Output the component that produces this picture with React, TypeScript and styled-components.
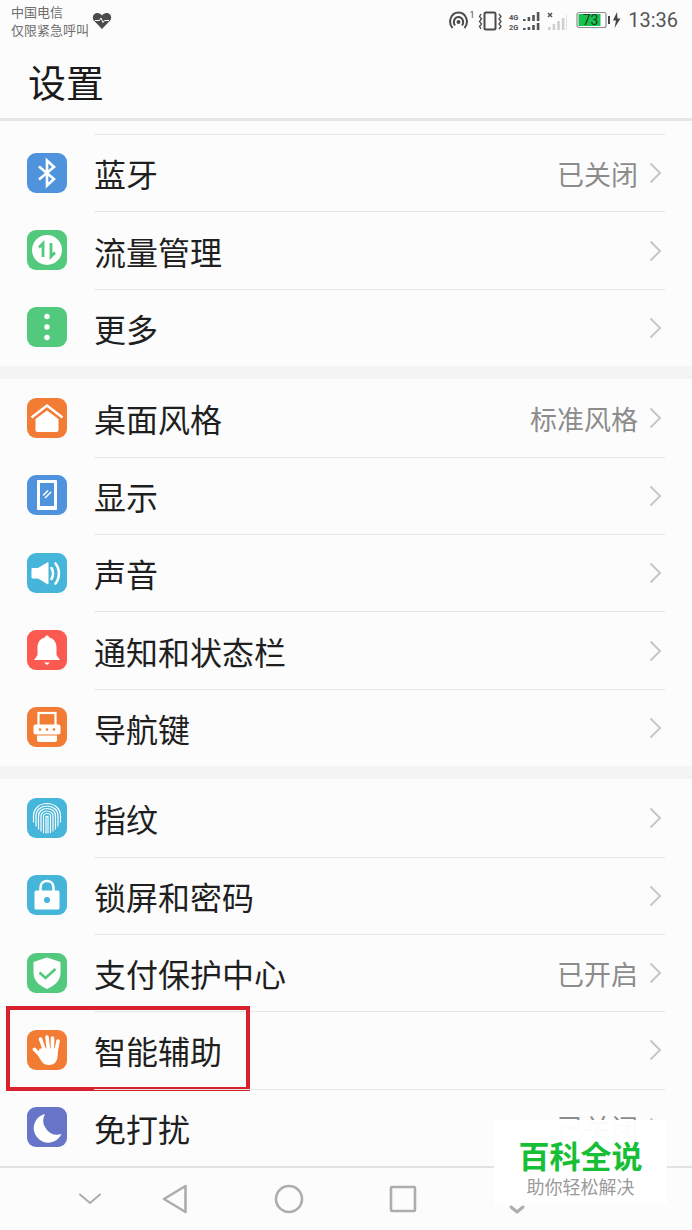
import React from 'react';
import styled, { createGlobalStyle } from 'styled-components';

const GlobalStyle = createGlobalStyle`
    html, body {
        margin: 0;
        padding: 0;
        background: #fcfcfc;
    }
    * {
        box-sizing: border-box;
    }
`;

const CJK = `'Noto Sans CJK SC', 'Noto Sans', sans-serif`;

const Page = styled.div`
    position: relative;
    width: 692px;
    height: 1230px;
    overflow: hidden;
    background: #fcfcfc;
    font-family: ${CJK};
    display: flex;
    flex-direction: column;
`;

const StatusBar = styled.div`
    height: 48px;
    flex: none;
    display: flex;
    align-items: flex-start;
    padding: 3px 14px 0 11px;
`;

const Carrier = styled.div`
    font-size: 13px;
    line-height: 18px;
    color: #6e6e6e;
    white-space: nowrap;
`;

const Heart = styled.svg`
    width: 20px;
    height: 18px;
    margin: 9px 0 0 3px;
`;

const StatusRight = styled.div`
    margin-left: auto;
    display: flex;
    align-items: center;
    height: 34px;
`;

const Network = styled.svg`
    width: 119px;
    height: 24px;
`;

const Battery = styled.svg`
    width: 47px;
    height: 24px;
    margin-left: 9px;
`;

const Clock = styled.span`
    font-family: Roboto, sans-serif;
    font-size: 20px;
    color: #555;
    margin-left: 5px;
`;

const TitleBar = styled.div`
    height: 73px;
    flex: none;
    border-bottom: 3px solid #e6e6e6;
    padding: 7px 0 0 28px;
`;

const Title = styled.h1`
    margin: 0;
    font-size: 38px;
    line-height: 52px;
    font-weight: 400;
    color: #1a1a1a;
`;

const List = styled.div`
    flex: 1;
    min-height: 0;
    padding-top: 13px;
    display: flex;
    flex-direction: column;
    gap: 13px;
    background: #f4f4f4;
    overflow: hidden;
`;

const ListTop = styled.div`
    height: 13px;
    margin: -13px 0 -13px;
    background: #fcfcfc;
    flex: none;
`;

const Group = styled.section`
    background: #fcfcfc;
    flex: none;
`;

const Row = styled.div`
    position: relative;
    height: 77.4px;
    display: flex;
    align-items: center;
    padding-left: 27px;
`;

const Tile = styled.svg<{ $bg: string }>`
    width: 40px;
    height: 40px;
    flex: none;
    border-radius: 9px;
    background: ${p => p.$bg};
`;

const RowBody = styled.div<{ $line: boolean }>`
    flex: 1;
    height: 100%;
    margin: 0 27px;
    display: flex;
    align-items: center;
    border-top: 1px solid ${p => (p.$line ? '#e6e6e6' : 'transparent')};
`;

const Label = styled.span`
    font-size: 32px;
    color: #1f1f1f;
    white-space: nowrap;
`;

const Value = styled.span`
    margin-left: auto;
    font-size: 27px;
    color: #8c8c8c;
    white-space: nowrap;
`;

const Chevron = styled.svg<{ $pushed: boolean }>`
    width: 13px;
    height: 22px;
    flex: none;
    margin: 0 3px 0 ${p => (p.$pushed ? '11px' : 'auto')};
`;

const Callout = styled.div`
    position: absolute;
    left: 6px;
    right: 442px;
    top: -5px;
    height: 85px;
    border: 4px solid #d8202f;
    pointer-events: none;
`;

const NavBar = styled.nav`
    height: 64px;
    flex: none;
    background: #fcfcfc;
    border-top: 2px solid #e2e2e2;
    display: flex;
    align-items: center;
    padding-left: 62px;
`;

const NavSlot = styled.div<{ $narrow?: boolean }>`
    width: ${p => (p.$narrow ? 56 : 114)}px;
    display: flex;
    justify-content: center;
`;

const NavIcon = styled.svg`
    width: 32px;
    height: 32px;
    fill: none;
    stroke: #adadad;
    stroke-width: 2.6;
    stroke-linejoin: round;
    stroke-linecap: round;
`;

const Badge = styled.div`
    position: absolute;
    left: 494px;
    top: 1120px;
    width: 173px;
    height: 85px;
    background: rgba(255, 255, 255, 0.97);
    display: flex;
    flex-direction: column;
    align-items: center;
    padding-top: 16px;
`;

const BadgeName = styled.div`
    font-size: 31px;
    line-height: 38px;
    font-weight: 700;
    color: #17bf37;
    white-space: nowrap;
`;

const BadgeSlogan = styled.div`
    font-size: 18px;
    line-height: 24px;
    color: #9b9b9b;
    white-space: nowrap;
`;

const BLUE = '#4f93dc';
const GREEN = '#52c97c';
const ORANGE = '#f37c35';
const TEAL = '#45b5d9';
const RED = '#fb5a50';
const PURPLE = '#6675c8';
const W = '#fff';

const icons: Record<string, { bg: string; art: React.ReactNode }> = {
    bluetooth: {
        bg: BLUE,
        art: <path d="M12 13.5 27 26 20 32.5V7.5L27 14 12 26.5" fill="none" stroke={W} strokeWidth="2.6" />
    },
    data: {
        bg: GREEN,
        art: (
            <>
                <circle cx="20" cy="20" r="15" fill={W} />
                <path d="M16 27V13.5L12 17.5" fill="none" stroke={GREEN} strokeWidth="2.8" />
                <path d="M24 13V26.5L28 22.5" fill="none" stroke={GREEN} strokeWidth="2.8" />
            </>
        )
    },
    more: {
        bg: GREEN,
        art: (
            <>
                <circle cx="20" cy="9.5" r="2.7" fill={W} />
                <circle cx="20" cy="20" r="2.7" fill={W} />
                <circle cx="20" cy="30.5" r="2.7" fill={W} />
            </>
        )
    },
    home: {
        bg: ORANGE,
        art: (
            <>
                <path d="M4.5 19.5 20 7.5 35.5 19.5" fill="none" stroke={W} strokeWidth="2.4" />
                <path d="M20 12.5 31.5 21V32a2 2 0 0 1-2 2H10.500a2 2 0 0 1-2-2V21Z" fill={W} />
            </>
        )
    },
    display: {
        bg: BLUE,
        art: (
            <>
                <rect x="10" y="5" width="20" height="30" rx="1" fill={W} />
                <rect x="13" y="8" width="14" height="23" fill={BLUE} />
                <path d="M16 20.500 21 15.500M18 23 24 17" stroke={W} strokeWidth="1.5" />
            </>
        )
    },
    sound: {
        bg: TEAL,
        art: (
            <>
                <path d="M5 15.500H11L21 9.500V31L11 25H5Z" fill={W} strokeLinejoin="round" stroke={W} />
                <path d="M24.500 15C26.500 18 26.500 23 24.500 26M28.500 10.500C33 16 33 25 28.500 30.500" fill="none" stroke={W} strokeWidth="2.6" strokeLinecap="round" />
            </>
        )
    },
    bell: {
        bg: RED,
        art: (
            <>
                <path d="M20 5.500c1.300 0 2 .9 2 1.900 5 1 7.500 5 7.500 10V25l3.500 5H7l3.500-5v-7.600c0-5 2.500-9 7.500-10 0-1 .7-1.900 2-1.900Z" fill={W} />
                <path d="M17 32.500h6l-3 2.500Z" fill={W} />
            </>
        )
    },
    navkeys: {
        bg: ORANGE,
        art: (
            <>
                <rect x="11.500" y="6" width="17" height="14" fill="none" stroke={W} strokeWidth="2.200" />
                <rect x="6.500" y="17.500" width="27" height="10" rx="2" fill={W} />
                <rect x="10" y="26" width="20" height="9" rx="2" fill={W} />
                <circle cx="13" cy="22.500" r="1.300" fill={ORANGE} />
                <circle cx="20" cy="22.500" r="1.300" fill={ORANGE} />
                <circle cx="27" cy="22.500" r="1.300" fill={ORANGE} />
                <path d="M9 28h22" stroke={ORANGE} strokeWidth="1.200" />
            </>
        )
    },
    fingerprint: {
        bg: TEAL,
        art: (
            <g fill="none" stroke={W} strokeWidth="1.200" strokeLinecap="round">
                <path d="M6.500 24V18C6.500 10.500 12.500 5.500 20 5.500S33.500 10.500 33.500 18V24" />
                <path d="M9 28V18C9 12 14 8 20 8S31 12 31 18V28" />
                <path d="M11.500 31V18C11.500 13.500 15.500 10.500 20 10.500S28.500 13.500 28.500 18V31" />
                <path d="M14 33V18C14 15 17 13 20 13S26 15 26 18V33" />
                <path d="M16.500 34.500V18.500C16.500 16.500 18 15.500 20 15.500S23.500 16.500 23.500 18.500V34.500" />
                <path d="M19 35V19C19 18 21 18 21 19V35" />
            </g>
        )
    },
    lock: {
        bg: TEAL,
        art: (
            <>
                <path d="M13.500 17V12.500C13.500 8.500 16.500 6 20 6S26.500 8.500 26.500 12.500V17" fill="none" stroke={W} strokeWidth="2.600" />
                <rect x="7.500" y="15.500" width="25" height="19" rx="1.500" fill={W} />
                <circle cx="20" cy="25" r="3" fill={TEAL} />
            </>
        )
    },
    shield: {
        bg: GREEN,
        art: (
            <>
                <path d="M20 4.500 33.500 9V20C33.500 28 27 33 20 36 13 33 6.500 28 6.500 20V9Z" fill={W} />
                <path d="M12.500 19.500 18.500 25 28.500 16" fill="none" stroke={GREEN} strokeWidth="2.600" />
            </>
        )
    },
    hand: {
        bg: ORANGE,
        art: (
            <>
                <g fill="none" stroke={W} strokeWidth="3.600" strokeLinecap="round">
                    <path d="M17.500 20 13.500 9" />
                    <path d="M21.500 20 20 7" />
                    <path d="M25.500 20 25.500 8" />
                    <path d="M29 22 31 11" />
                    <path d="M13 25 7.500 19.500" />
                </g>
                <path d="M12.500 18.500H31L30.500 27C30 32 27 35 21.500 35 16 35 14 31 11 25Z" fill={W} />
            </>
        )
    },
    moon: {
        bg: PURPLE,
        art: <path d="M18 7A14.500 14.500 0 1 0 34.500 27 14 14 0 0 1 18 7Z" fill={W} />
    }
};

interface Entry {
    icon: string;
    label: string;
    value?: string;
}

const groups: Entry[][] = [
    [
        { icon: 'bluetooth', label: '蓝牙', value: '已关闭' },
        { icon: 'data', label: '流量管理' },
        { icon: 'more', label: '更多' }
    ],
    [
        { icon: 'home', label: '桌面风格', value: '标准风格' },
        { icon: 'display', label: '显示' },
        { icon: 'sound', label: '声音' },
        { icon: 'bell', label: '通知和状态栏' },
        { icon: 'navkeys', label: '导航键' }
    ],
    [
        { icon: 'fingerprint', label: '指纹' },
        { icon: 'lock', label: '锁屏和密码' },
        { icon: 'shield', label: '支付保护中心', value: '已开启' },
        { icon: 'hand', label: '智能辅助' },
        { icon: 'moon', label: '免打扰', value: '已关闭' }
    ]
];

const SettingRow = ({ entry, line }: { entry: Entry; line: boolean }) => {
    const icon = icons[entry.icon];
    return (
        <Row>
            <Tile $bg={icon.bg} viewBox="0 0 40 40">
                {icon.art}
            </Tile>
            <RowBody $line={line}>
                <Label>{entry.label}</Label>
                {entry.value && <Value>{entry.value}</Value>}
                <Chevron $pushed={!!entry.value} viewBox="0 0 13 22">
                    <path d="M1.500 1.500 11 11 1.500 20.500" fill="none" stroke="#c6c6c6" strokeWidth="2" />
                </Chevron>
            </RowBody>
            {entry.icon === 'hand' && <Callout />}
        </Row>
    );
};

const bars = (x: number, base: number, heights: number[], fill: string) =>
    heights.map((h, i) => <rect key={i} x={x + i * 4.6} y={base - h} width="2.600" height={h} fill={fill} />);

export default function App() {
    return (
        <Page>
            <GlobalStyle />
            <StatusBar>
                <Carrier>
                    中国电信
                    <br />
                    仅限紧急呼叫
                </Carrier>
                <Heart viewBox="0 0 20 18">
                    <path d="M10 17 1.800 8.500C-.5 5.500 1.500 1 5.300 1 7.300 1 9 2 10 3.500 11 2 12.700 1 14.700 1 18.500 1 20.500 5.500 18.200 8.500Z" fill="#4c4c4c" />
                    <path d="M3 8.500H7.500L9 6 11 10.500 12.500 8.500H17" fill="none" stroke="#fff" strokeWidth="1" />
                </Heart>
                <StatusRight>
                    <Network viewBox="0 0 119 24">
                        <g fill="none" stroke="#4a4a4a" strokeWidth="2">
                            <path d="M4.500 20C-.5 14 3 4.500 10.500 4.500S21.500 14 16.500 20" />
                            <path d="M7 17.500C4.500 14 6.500 9 10.500 9S16.500 14 14 17.500" />
                        </g>
                        <circle cx="10.500" cy="14" r="2" fill="#4a4a4a" />
                        <text x="21.500" y="10" fontFamily="Roboto, sans-serif" fontSize="9" fill="#4a4a4a">1</text>
                        <rect x="36.500" y="4.500" width="11" height="17" rx="1.500" fill="none" stroke="#4a4a4a" strokeWidth="2" />
                        <path d="M33 6 31.500 8.500 33.500 11 31.500 13.500 33.500 16 31.500 18.500 33 21M51 6 53 8.500 51 11 53 13.500 51 16 53 18.500 51 21" fill="none" stroke="#4a4a4a" strokeWidth="1.300" />
                        <text x="61" y="12" fontFamily="Roboto, sans-serif" fontSize="7.500" fontWeight="700" fill="#555">4G</text>
                        <text x="61" y="22" fontFamily="Roboto, sans-serif" fontSize="7.500" fontWeight="700" fill="#555">2G</text>
                        {bars(75, 13, [2, 4, 6, 9], '#555')}
                        {bars(75, 22, [2, 3, 5, 7], '#555')}
                        <path d="M100 5 104 9M104 5 100 9" stroke="#555" strokeWidth="1.600" />
                        {bars(100, 22, [3, 6, 9, 12, 15], '#cfcfcf')}
                    </Network>
                    <Battery viewBox="0 0 47 24">
                        <rect x="1" y="4.500" width="29" height="15" rx="2" fill="#fff" stroke="#8c8c8c" strokeWidth="1.200" />
                        <rect x="2.500" y="6" width="22" height="12" fill="#18c24f" />
                        <rect x="32" y="8" width="2" height="8" fill="#444" />
                        <text x="14.500" y="17" textAnchor="middle" fontFamily="Roboto, sans-serif" fontSize="14" fill="#1f3a26">73</text>
                        <path d="M41 4 37 12.500H40L38.500 20 44.500 10.500H41.500Z" fill="#444" />
                    </Battery>
                    <Clock>13:36</Clock>
                </StatusRight>
            </StatusBar>
            <TitleBar>
                <Title>设置</Title>
            </TitleBar>
            <List>
                <ListTop />
                {groups.map((rows, g) => (
                    <Group key={g}>
                        {rows.map((entry, i) => (
                            <SettingRow key={entry.icon} entry={entry} line={i > 0 || g === 0} />
                        ))}
                    </Group>
                ))}
            </List>
            <NavBar>
                <NavSlot $narrow>
                    <NavIcon viewBox="0 0 32 32">
                        <path d="M6 11.500 16 20 26 11.500" strokeWidth="2" />
                    </NavIcon>
                </NavSlot>
                <NavSlot>
                    <NavIcon viewBox="0 0 32 32">
                        <path d="M26.500 3V29L5 16Z" />
                    </NavIcon>
                </NavSlot>
                <NavSlot>
                    <NavIcon viewBox="0 0 32 32">
                        <circle cx="16" cy="16" r="13" />
                    </NavIcon>
                </NavSlot>
                <NavSlot>
                    <NavIcon viewBox="0 0 32 32">
                        <rect x="4" y="4" width="24" height="24" rx="1" />
                    </NavIcon>
                </NavSlot>
                <NavSlot>
                    <NavIcon viewBox="0 0 32 32">
                        <path d="M10 24 16 29 22 24" strokeWidth="3" />
                    </NavIcon>
                </NavSlot>
            </NavBar>
            <Badge>
                <BadgeName>百科全说</BadgeName>
                <BadgeSlogan>助你轻松解决</BadgeSlogan>
            </Badge>
        </Page>
    );
}
